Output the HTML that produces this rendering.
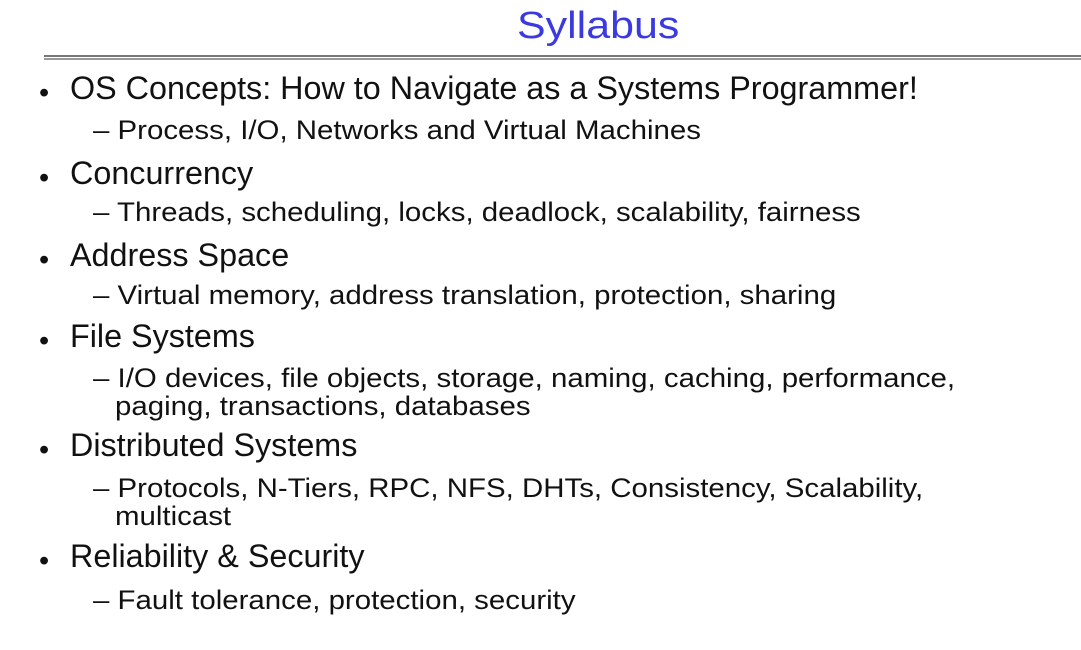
<html><head><style>
body{margin:0;width:1081px;height:650px;background:#fff;position:relative;font-family:"Liberation Sans",Arial,sans-serif;color:#111;overflow:hidden}
div{position:absolute;white-space:nowrap;line-height:1;transform-origin:0 0}
.t{font-size:38px;color:#3a3ae0;left:517px;top:7px;transform:scaleX(1.13)}
.m{font-size:32px;left:70px;transform:scaleX(1.01)}
.b{font-size:29px;left:39px}
.s{font-size:27px;left:93px;transform:scaleX(1.09)}
.c{font-size:27px;left:115px;transform:scaleX(1.09)}
</style></head><body>
<div class="t">Syllabus</div>
<div style="left:44px;top:55px;width:1037px;height:2px;background:#777"></div>
<div style="left:44px;top:58px;width:1037px;height:2px;background:#999"></div>
<div class="b" style="top:79px">•</div><div class="m" style="top:72px">OS Concepts: How to Navigate as a Systems Programmer!</div>
<div class="s" style="top:117px">– Process, I/O, Networks and Virtual Machines</div>
<div class="b" style="top:164px">•</div><div class="m" style="top:157px">Concurrency</div>
<div class="s" style="top:199px">– Threads, scheduling, locks, deadlock, scalability, fairness</div>
<div class="b" style="top:246px">•</div><div class="m" style="top:239px">Address Space</div>
<div class="s" style="top:282px">– Virtual memory, address translation, protection, sharing</div>
<div class="b" style="top:327px">•</div><div class="m" style="top:320px">File Systems</div>
<div class="s" style="top:365px">– I/O devices, file objects, storage, naming, caching, performance,</div>
<div class="c" style="top:393px">paging, transactions, databases</div>
<div class="b" style="top:436px">•</div><div class="m" style="top:429px">Distributed Systems</div>
<div class="s" style="top:475px">– Protocols, N-Tiers, RPC, NFS, DHTs, Consistency, Scalability,</div>
<div class="c" style="top:503px">multicast</div>
<div class="b" style="top:547px">•</div><div class="m" style="top:540px">Reliability &amp; Security</div>
<div class="s" style="top:587px">– Fault tolerance, protection, security</div>
</body></html>
